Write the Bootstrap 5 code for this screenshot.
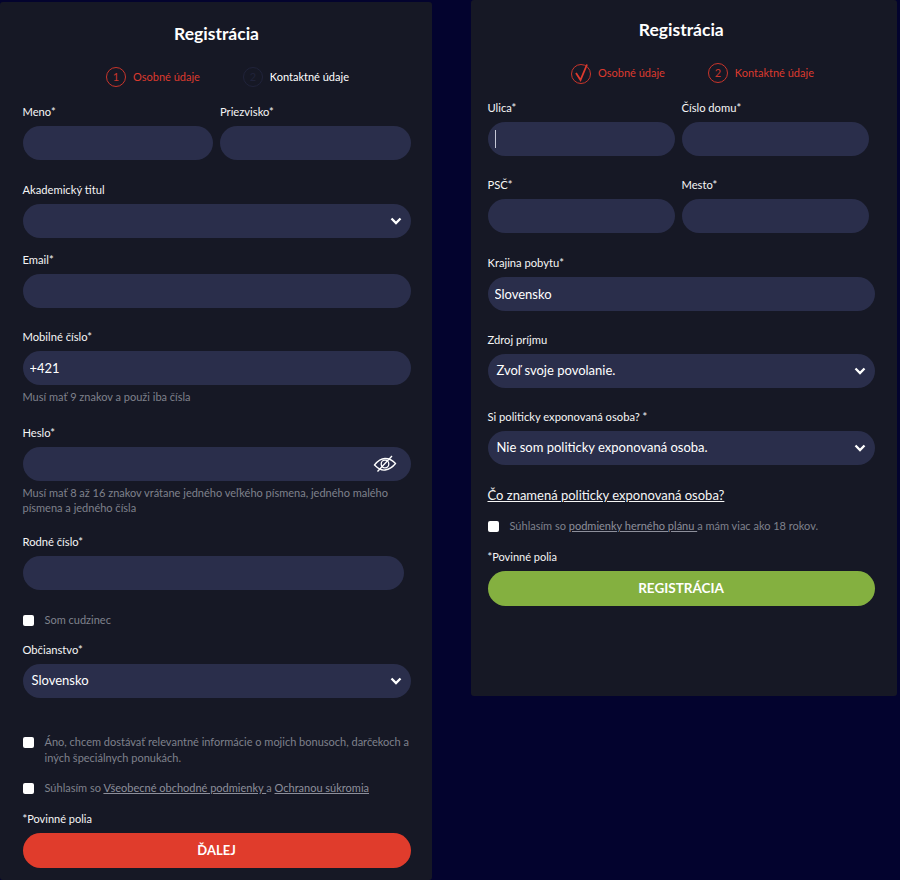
<!DOCTYPE html>
<html lang="sk">
<head>
    <meta charset="UTF-8">
    <meta name="viewport" content="width=device-width, initial-scale=1.0">
    <title>Registrácia</title>
    <link href="https://cdn.jsdelivr.net/npm/bootstrap@5.3.0/dist/css/bootstrap.min.css" rel="stylesheet">
    <style>
        body {
            background-color: #03032e;
            font-family: "Lato", "Noto Sans", sans-serif;
            font-size: 11px;
            color: #fff;
            height: 880px;
            overflow: hidden;
        }

        .reg-wrap { gap: 39px; }

        .reg-panel {
            background-color: #161825;
            border-radius: 3px;
        }

        .reg-left { width: 432px; height: 878px; margin-top: 2px; padding: 23px 21.5px 0 22.5px; }
        .reg-right { width: 426px; height: 696px; padding: 21px 22px 0 16.5px; }

        .reg-title {
            font-size: 17.5px;
            line-height: 18px;
            font-weight: 700;
            text-align: center;
            margin: 0;
        }

        .step-row { height: 22px; margin-top: 23px; margin-bottom: 15px; gap: 43px; }
        .step-left { padding-left: 83.5px; }
        .step-right { padding-left: 83.5px; }
        .step-item { gap: 7px; }
        .step-num {
            width: 20px;
            height: 20px;
            border-radius: 50%;
            border: 1px solid #c9352b;
            color: #c9352b;
            font-size: 11px;
            line-height: 17px;
            text-align: center;
        }
        .step-num.idle { border-color: #20233a; color: #20233a; }
        .step-on { color: #dc3a2e; }

        .fld-label {
            display: block;
            font-size: 11.2px;
            line-height: 18px;
            margin-bottom: 5px;
            color: #f5f5f5;
        }

        .fld-row { gap: 7px; }
        .fld-box {
            background-color: #2a2e4b;
            border: 0;
            border-radius: 17px;
            height: 34px;
            width: 100%;
            padding: 0 9px;
            color: #fff;
            font-size: 13px;
            box-shadow: none;
        }
        .fld-box:focus { background-color: #2a2e4b; color: #fff; box-shadow: none; }
        .fld-plain { padding-left: 7px; }
        .fld-short { width: 381px; }
        .fld-right-w { width: 381px; }

        .fld-wrap { position: relative; }
        .eye-icon { position: absolute; top: 6px; right: 14px; }
        .text-cursor {
            position: absolute;
            left: 7px;
            top: 8px;
            width: 1px;
            height: 18px;
            background-color: #c6c8d6;
        }

        .caret-box {
            display: flex;
            align-items: center;
            justify-content: space-between;
        }

        .fld-help {
            font-size: 11px;
            line-height: 15px;
            color: #7f818c;
            margin-top: 4px;
        }

        .sp-7 { margin-top: 7px; }
        .sp-13 { margin-top: 13px; }
        .sp-14 { margin-top: 14px; }
        .sp-15 { margin-top: 15px; }
        .sp-18 { margin-top: 18px; }
        .sp-20 { margin-top: 20px; }
        .sp-21 { margin-top: 21px; }
        .sp-22 { margin-top: 22px; }
        .sp-36 { margin-top: 36px; }

        .reg-check { gap: 11px; font-size: 11px; line-height: 16px; color: #7f818c; }
        .reg-check a { color: #8d8f9b; }
        .reg-check .form-check-input {
            width: 11px;
            height: 11px;
            margin: 3px 0 0;
            flex-shrink: 0;
            border: 0;
            border-radius: 2px;
            background-color: #fff;
        }

        .must-note { font-size: 11px; line-height: 15px; color: #f5f5f5; }

        .reg-btn {
            display: block;
            height: 35px;
            border: 0;
            border-radius: 18px;
            font-size: 13px;
            font-weight: 700;
            color: #fff;
            padding: 0;
        }
        .reg-btn-red { background-color: #e03c2c; }
        .reg-btn-red:hover { background-color: #e03c2c; color: #fff; }
        .reg-btn-green { background-color: #84b040; width: 387px; font-size: 13.5px; }
        .reg-btn-green:hover { background-color: #84b040; color: #fff; }

        .pep-link { font-size: 13px; line-height: 18px; color: #f5f5f5; }
    </style>
</head>
<body class="m-0">
    <div class="d-flex reg-wrap">
        <!-- step 1 -->
        <div class="reg-panel reg-left flex-shrink-0">
            <h1 class="reg-title">Registrácia</h1>
            <div class="d-flex align-items-center step-row step-left">
                <div class="d-flex align-items-center step-item step-on"><span class="step-num">1</span><span>Osobné údaje</span></div>
                <div class="d-flex align-items-center step-item"><span class="step-num idle">2</span><span>Kontaktné údaje</span></div>
            </div>

            <div class="d-flex fld-row">
                <div class="w-50"><label class="fld-label">Meno*</label><input class="form-control fld-box" type="text"></div>
                <div class="w-50"><label class="fld-label">Priezvisko*</label><input class="form-control fld-box" type="text"></div>
            </div>

            <div class="sp-21">
                <label class="fld-label">Akademický titul</label>
                <div class="fld-box caret-box"><span></span><svg width="12" height="8" viewBox="0 0 12 8"><path d="M1.5 1.5 6 6l4.5-4.5" fill="none" stroke="#fff" stroke-width="2.3"/></svg></div>
            </div>

            <div class="sp-13">
                <label class="fld-label">Email*</label>
                <input class="form-control fld-box" type="text">
            </div>

            <div class="sp-20">
                <label class="fld-label">Mobilné číslo*</label>
                <input class="form-control fld-box fld-plain" type="text" value="+421">
                <div class="fld-help">Musí mať 9 znakov a použi iba čísla</div>
            </div>

            <div class="sp-20">
                <label class="fld-label">Heslo*</label>
                <div class="fld-wrap">
                    <input class="form-control fld-box" type="password">
                    <svg class="eye-icon" width="24" height="22" viewBox="0 0 24 22" fill="none" stroke="#fff" stroke-width="1.3">
                        <path d="M1.5 12C5 7.5 8.500 5.500 12 5.500s7 1 10.500 5C19 15 15.500 16.500 12 17S5 15.500 1.500 12Z"/>
                        <circle cx="12" cy="11" r="3.800"/>
                        <path d="M4.500 18.500 19 3"/>
                    </svg>
                </div>
                <div class="fld-help">Musí mať 8 až 16 znakov vrátane jedného veľkého písmena, jedného malého písmena a jedného čísla</div>
            </div>

            <div class="sp-18">
                <label class="fld-label">Rodné číslo*</label>
                <input class="form-control fld-box fld-short" type="text">
            </div>

            <div class="d-flex reg-check sp-22"><input class="form-check-input" type="checkbox"><span>Som cudzinec</span></div>

            <div class="sp-13">
                <label class="fld-label">Občianstvo*</label>
                <div class="fld-box caret-box"><span>Slovensko</span><svg width="12" height="8" viewBox="0 0 12 8"><path d="M1.5 1.5 6 6l4.5-4.5" fill="none" stroke="#fff" stroke-width="2.3"/></svg></div>
            </div>

            <div class="d-flex reg-check sp-36"><input class="form-check-input" type="checkbox"><span>Áno, chcem dostávať relevantné informácie o mojich bonusoch, darčekoch a iných špeciálnych ponukách.</span></div>
            <div class="d-flex reg-check sp-14"><input class="form-check-input" type="checkbox"><span>Súhlasím so <a href="#">Všeobecné obchodné podmienky </a>a <a href="#">Ochranou súkromia</a></span></div>

            <div class="must-note sp-15">*Povinné polia</div>
            <button class="btn reg-btn reg-btn-red w-100 sp-7" type="button">ĎALEJ</button>
        </div>

        <!-- step 2 -->
        <div class="reg-panel reg-right flex-shrink-0">
            <h1 class="reg-title">Registrácia</h1>
            <div class="d-flex align-items-center step-row step-right">
                <div class="d-flex align-items-center step-item step-on">
                    <svg width="20" height="22" viewBox="0 0 20 22" fill="none"><circle cx="10" cy="12" r="9.5" stroke="#c9352b"/><path d="M5 11l4.500 7L16 2.500" stroke="#dc3a2e" stroke-width="1.8"/></svg>
                    <span>Osobné údaje</span>
                </div>
                <div class="d-flex align-items-center step-item step-on"><span class="step-num">2</span><span>Kontaktné údaje</span></div>
            </div>

            <div class="d-flex fld-row fld-right-w">
                <div class="w-50">
                    <label class="fld-label">Ulica*</label>
                    <div class="fld-wrap"><input class="form-control fld-box" type="text"><span class="text-cursor"></span></div>
                </div>
                <div class="w-50"><label class="fld-label">Číslo domu*</label><input class="form-control fld-box" type="text"></div>
            </div>
            <div class="d-flex fld-row fld-right-w sp-20">
                <div class="w-50"><label class="fld-label">PSČ*</label><input class="form-control fld-box" type="text"></div>
                <div class="w-50"><label class="fld-label">Mesto*</label><input class="form-control fld-box" type="text"></div>
            </div>

            <div class="sp-21">
                <label class="fld-label">Krajina pobytu*</label>
                <input class="form-control fld-box fld-plain" type="text" value="Slovensko">
            </div>
            <div class="sp-20">
                <label class="fld-label">Zdroj príjmu</label>
                <div class="fld-box caret-box"><span>Zvoľ svoje povolanie.</span><svg width="12" height="8" viewBox="0 0 12 8"><path d="M1.5 1.5 6 6l4.5-4.5" fill="none" stroke="#fff" stroke-width="2.3"/></svg></div>
            </div>
            <div class="sp-20">
                <label class="fld-label">Si politicky exponovaná osoba? *</label>
                <div class="fld-box caret-box"><span>Nie som politicky exponovaná osoba.</span><svg width="12" height="8" viewBox="0 0 12 8"><path d="M1.5 1.5 6 6l4.5-4.5" fill="none" stroke="#fff" stroke-width="2.3"/></svg></div>
            </div>

            <div class="sp-21"><a href="#" class="pep-link">Čo znamená politicky exponovaná osoba?</a></div>
            <div class="d-flex reg-check sp-13"><input class="form-check-input" type="checkbox"><span>Súhlasím so <a href="#">podmienky herného plánu </a>a mám viac ako 18 rokov.</span></div>
            <div class="must-note sp-15">*Povinné polia</div>
            <button class="btn reg-btn reg-btn-green sp-7" type="button">REGISTRÁCIA</button>
        </div>
    </div>
    <script src="https://cdn.jsdelivr.net/npm/bootstrap@5.3.0/dist/js/bootstrap.bundle.min.js"></script>
</body>
</html>
